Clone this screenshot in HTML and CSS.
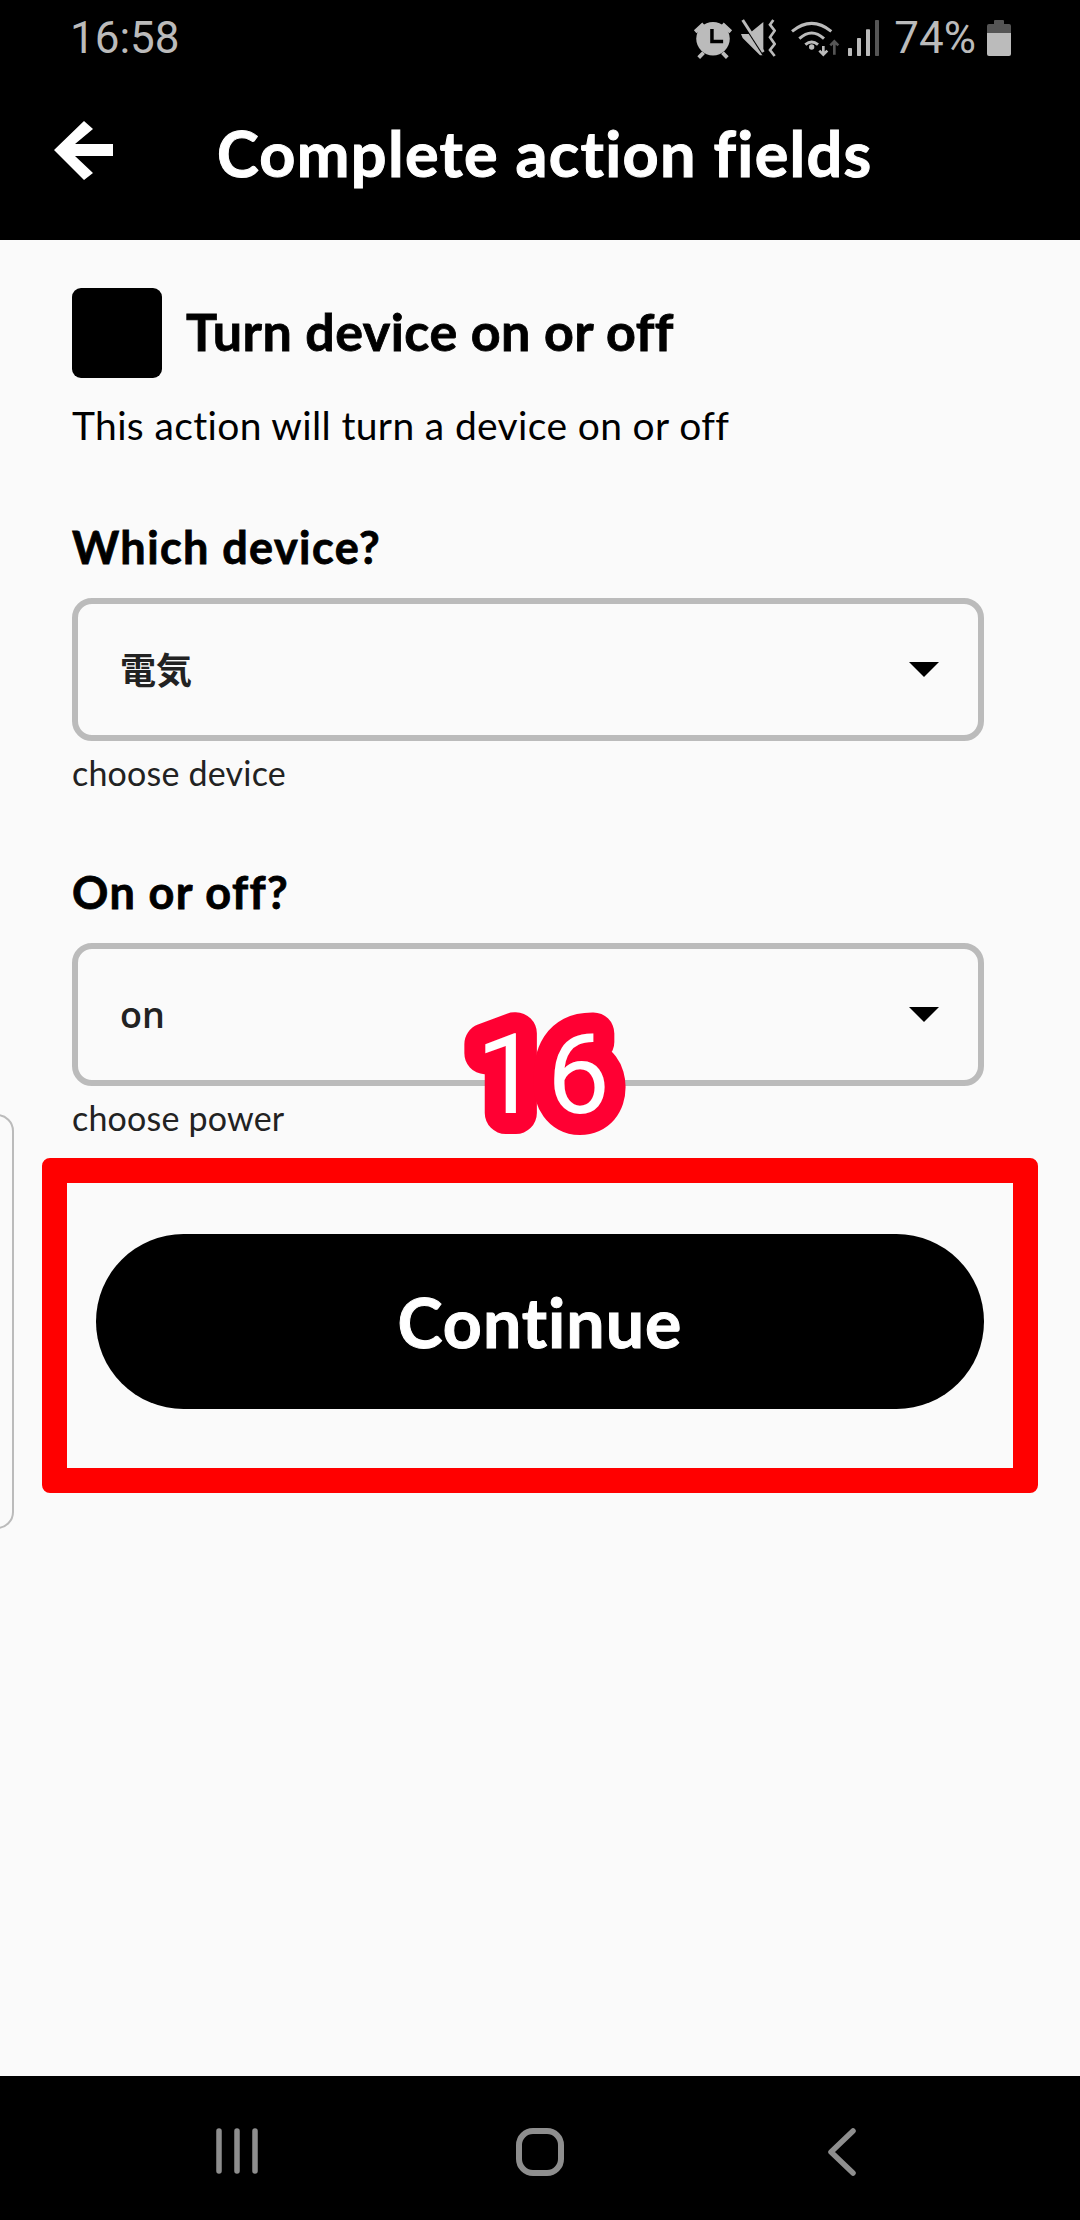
FILE: index.html
```html
<!DOCTYPE html>
<html lang="en">
<head>
  <meta charset="UTF-8" />
  <title>Complete action fields</title>
  <link rel="stylesheet" href="styles.css">
</head>
<body>

  <div class="phone">
    <div class="top">
      <div class="status">
        <span class="time">16:58</span>
        <div class="status-right">
          <svg class="ic-alarm" viewBox="0 0 126 120">
            <circle cx="63" cy="62" r="48" fill="#bbb"/>
            <path d="M12 42 L36 20 M114 42 L90 20 M22 116 L36 102 M104 116 L90 102" stroke="#bbb" stroke-width="11" fill="none"/>
            <path d="M60 34 V70 H92" stroke="#000" stroke-width="10" fill="none"/>
          </svg>
          <svg class="ic-mute" viewBox="0 0 108 120">
            <path d="M3 48 L26 48 L70 12 L70 112 L60 112 L8 60 Z" fill="#bbb"/>
            <path d="M8 12 L72 112" stroke="#000" stroke-width="8" fill="none"/>
            <path d="M8 6 L70 102" stroke="#bbb" stroke-width="9" fill="none"/>
            <path d="M100 6 L90 20 L104 38 L90 58 L104 78 L90 96 L104 114" stroke="#bbb" stroke-width="8" fill="none"/>
          </svg>
          <svg class="ic-wifi" viewBox="0 0 150 120">
            <path d="M6 40 Q65 -8 124 40 M28 62 Q65 28 102 62 M46 80 Q65 64 84 80" stroke="#bbb" stroke-width="9" fill="none"/>
            <circle cx="65" cy="87" r="8" fill="#bbb"/>
            <path d="M100 84 V110 M88 98 L100 110 L112 98" stroke="#bbb" stroke-width="8" fill="none"/>
            <path d="M133 110 V70 M121 82 L133 70 L145 82" stroke="#555" stroke-width="8" fill="none"/>
          </svg>
          <svg class="ic-signal" viewBox="0 0 96 120">
            <rect x="0" y="90" width="12" height="24" rx="2" fill="#bbb"/>
            <rect x="27" y="60" width="12" height="54" rx="2" fill="#bbb"/>
            <rect x="54" y="34" width="12" height="80" rx="2" fill="#bbb"/>
            <rect x="81" y="6" width="12" height="108" rx="2" fill="#555"/>
          </svg>
          <span class="battery-text">74%</span>
          <div class="battery"><div class="battery-tip"></div><div class="battery-empty"></div><div class="battery-full"></div></div>
        </div>
      </div>
      <div class="toolbar">
        <svg class="back-arrow" viewBox="0 0 59 59">
          <path d="M0 29 L30 0 L39 8 L21 23 H59 V35 H21 L39 52 L30 59 Z" fill="#fff"/>
        </svg>
        <h1>Complete action fields</h1>
      </div>
    </div>

    <div class="content">
      <div class="side-card"></div>

      <div class="action-head">
        <div class="action-icon"></div>
        <h2>Turn device on or off</h2>
      </div>
      <p class="action-desc">This action will turn a device on or off</p>

      <div class="field first">
        <label>Which device?</label>
        <div class="select">
          <span class="cjk">電気</span>
          <div class="caret"></div>
        </div>
        <div class="hint">choose device</div>
      </div>

      <div class="field">
        <label>On or off?</label>
        <div class="select">
          <span class="value">on</span>
          <div class="caret"></div>
        </div>
        <div class="hint">choose power</div>
      </div>

      <div class="frame">
        <div class="continue">Continue</div>
      </div>

      <svg class="step-badge" viewBox="0 0 190 150">
        <text class="step-outline" x="89" y="113" text-anchor="middle">16</text>
        <text class="step-fill" x="89" y="113" text-anchor="middle">16</text>
      </svg>
    </div>

    <div class="navbar">
      <svg class="nav-recents" viewBox="0 0 44 46">
        <path d="M3 3 V43 M21 3 V43 M39 3 V43" stroke="#8e8e8e" stroke-width="5.5" stroke-linecap="round" fill="none"/>
      </svg>
      <svg class="nav-home" viewBox="0 0 48 48">
        <rect x="3" y="3" width="42" height="42" rx="14" fill="none" stroke="#8e8e8e" stroke-width="6"/>
      </svg>
      <svg class="nav-back" viewBox="0 0 30 48">
        <path d="M26 3 L4 24 L26 45" stroke="#8e8e8e" stroke-width="5.5" stroke-linecap="round" stroke-linejoin="round" fill="none"/>
      </svg>
    </div>
  </div>

</body>
</html>
```

FILE: styles.css
```css
* {
  box-sizing: border-box;
}

html, body {
  margin: 0;
  padding: 0;
}

body {
  font-family: "Lato", "Noto Sans CJK JP", sans-serif;
  background: #fafafa;
}

.phone {
  width: 1080px;
  height: 2220px;
  display: flex;
  flex-direction: column;
  overflow: hidden;
}

.top {
  background: #000;
  height: 240px;
  flex: none;
}

.status {
  height: 72px;
  display: flex;
  justify-content: space-between;
  align-items: center;
  padding: 3px 69px 0 70px;
  color: #bbb;
  font-family: "Roboto", sans-serif;
}

.time {
  font-size: 44px;
}

.status-right {
  display: flex;
  align-items: center;
}

.ic-alarm { width: 44px; height: 42px; margin-right: 5px; }
.ic-mute { width: 36px; height: 40px; margin-right: 14px; }
.ic-wifi { width: 50px; height: 40px; margin-right: 8px; }
.ic-signal { width: 32px; height: 40px; margin-right: 14px; }

.battery-text {
  font-size: 44px;
  margin-right: 11px;
}

.battery {
  width: 24px;
  height: 36px;
  display: flex;
  flex-direction: column;
  align-items: center;
}

.battery-tip {
  width: 10px;
  height: 4px;
  background: #555;
  border-radius: 1px 1px 0 0;
}

.battery-empty {
  width: 100%;
  height: 9px;
  background: #555;
  border-radius: 2px 2px 0 0;
}

.battery-full {
  width: 100%;
  flex: 1;
  background: #bbb;
  border-radius: 0 0 2px 2px;
}

.toolbar {
  height: 168px;
  display: flex;
  align-items: center;
  padding-left: 54px;
}

.back-arrow {
  width: 59px;
  height: 59px;
  margin-top: -12px;
  flex: none;
}

.toolbar h1 {
  margin: -8px 0 0 104px;
  color: #fff;
  font-size: 63px;
  font-weight: 700;
  letter-spacing: 1.3px;
  -webkit-text-stroke: 1px #fff;
}

.content {
  position: relative;
  flex: 1;
  padding: 48px 96px 0 72px;
}

.side-card {
  position: absolute;
  left: -20px;
  top: 874px;
  width: 34px;
  height: 415px;
  border: 2px solid #bbb;
  border-radius: 20px;
}

.action-head {
  display: flex;
  align-items: center;
}

.action-icon {
  width: 90px;
  height: 90px;
  background: #000;
  border-radius: 9px;
  flex: none;
}

.action-head h2 {
  margin: -4px 0 0 24px;
  font-size: 52px;
  font-weight: 700;
  letter-spacing: 0.45px;
  -webkit-text-stroke: 0.8px #000;
  color: #000;
}

.action-desc {
  margin: 25px 0 0;
  font-size: 39px;
  line-height: 44px;
  letter-spacing: 0.35px;
  color: #000;
}

.field {
  margin-top: 73px;
}

.field label {
  display: block;
  font-size: 45px;
  line-height: 54px;
  font-weight: 700;
  letter-spacing: 1.4px;
  -webkit-text-stroke: 0.8px #000;
  color: #000;
}

.select {
  height: 143px;
  margin-top: 24px;
  border: 6px solid #bbb;
  border-radius: 20px;
  display: flex;
  justify-content: space-between;
  align-items: center;
  padding: 0 39px 0 42px;
  color: #222;
}

.cjk {
  font-family: "Noto Sans CJK JP", sans-serif;
  font-size: 36px;
  font-weight: 700;
  margin-top: -3px;
}

.value {
  font-family: "Open Sans", sans-serif;
  font-size: 36px;
  font-weight: 600;
}

.caret {
  width: 0;
  height: 0;
  border-left: 15px solid transparent;
  border-right: 15px solid transparent;
  border-top: 15px solid #000;
}

.hint {
  margin-top: 13px;
  font-size: 34px;
  line-height: 38px;
  letter-spacing: 0.2px;
  color: #222;
}

.frame {
  margin: 21px -54px 0 -30px;
  height: 335px;
  border: 25px solid #f00;
  border-radius: 8px;
  padding: 51px 29px 0;
}

.continue {
  height: 175px;
  background: #000;
  border-radius: 88px;
  color: #fff;
  font-size: 68px;
  font-weight: 700;
  letter-spacing: 1px;
  -webkit-text-stroke: 1px #fff;
  display: flex;
  align-items: center;
  justify-content: center;
}

.step-badge {
  position: absolute;
  left: 458px;
  top: 760px;
  width: 190px;
  height: 150px;
}

.step-badge text {
  font-family: "Roboto", sans-serif;
  font-size: 112px;
  letter-spacing: 8px;
  stroke-linejoin: round;
}

.step-outline {
  fill: #f03;
  stroke: #f03;
  stroke-width: 42px;
}

.step-fill {
  fill: #fff;
}

.navbar {
  height: 144px;
  flex: none;
  background: #000;
  position: relative;
}

.nav-recents {
  position: absolute;
  left: 216px;
  top: 52px;
  width: 44px;
  height: 46px;
}

.nav-home {
  position: absolute;
  left: 516px;
  top: 52px;
  width: 48px;
  height: 48px;
}

.nav-back {
  position: absolute;
  left: 827px;
  top: 52px;
  width: 30px;
  height: 48px;
}
```
